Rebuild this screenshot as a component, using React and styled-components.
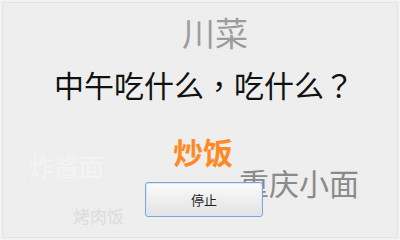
import React from "react";
import styled, { createGlobalStyle } from "styled-components";

const GlobalStyle = createGlobalStyle`
  html, body {
    margin: 0;
    padding: 0;
    background: #f2f2f2;
  }
  body {
    font-family: "Noto Sans CJK SC", "Noto Sans", sans-serif;
  }
`;

const dishes = [
  { name: "川菜", left: 179, top: 13, size: 33, color: "#9c9c9c" },
  { name: "炸酱面", left: 26, top: 151, size: 25, color: "#f4f4f4" },
  { name: "重庆小面", left: 236, top: 164, size: 30, color: "#8a8a8a" },
  { name: "烤肉饭", left: 70, top: 204, size: 17, color: "#dcdcdc" },
];

const Frame = styled.div`
  position: relative;
  box-sizing: border-box;
  margin: 2px;
  width: 396px;
  height: 236px;
  border: 1px solid #e4e4e4;
  background: #eeeeee;
  display: flex;
  flex-direction: column;
  align-items: center;
  overflow: hidden;
`;

const Floating = styled.span`
  position: absolute;
  left: ${(p) => p.$left}px;
  top: ${(p) => p.$top}px;
  font-size: ${(p) => p.$size}px;
  color: ${(p) => p.$color};
  line-height: 1;
  white-space: nowrap;
  z-index: 0;
`;

const Question = styled.h1`
  position: relative;
  z-index: 1;
  margin: 66px 0 0 8px;
  font-size: 30px;
  font-weight: normal;
  line-height: 30px;
  color: #111;
`;

const Punct = styled.span`
  font-family: "Noto Sans CJK TC", "Noto Sans CJK SC", sans-serif;
`;

const Picked = styled.div`
  position: relative;
  z-index: 1;
  margin: 37px 0 0 6px;
  font-size: 30px;
  font-weight: bold;
  line-height: 30px;
  color: #ff8a24;
`;

const StopButton = styled.button`
  position: relative;
  z-index: 1;
  margin: 16px 0 0 8px;
  width: 118px;
  height: 35px;
  border: 1px solid #7ea4dc;
  border-radius: 3px;
  background: linear-gradient(to bottom, #fbfbfb, #e2e2e2);
  box-shadow: inset 0 0 0 1px #dde8f7;
  font-family: "Noto Sans CJK SC", sans-serif;
  font-size: 13px;
  color: #222;
  cursor: pointer;
`;

export default function App() {
  return (
    <>
      <GlobalStyle />
      <Frame>
        {dishes.map((d) => (
          <Floating
            key={d.name}
            $left={d.left}
            $top={d.top}
            $size={d.size}
            $color={d.color}
          >
            {d.name}
          </Floating>
        ))}
        <Question>
          中午吃什么<Punct>，</Punct>吃什么<Punct>？</Punct>
        </Question>
        <Picked>炒饭</Picked>
        <StopButton>停止</StopButton>
      </Frame>
    </>
  );
}
